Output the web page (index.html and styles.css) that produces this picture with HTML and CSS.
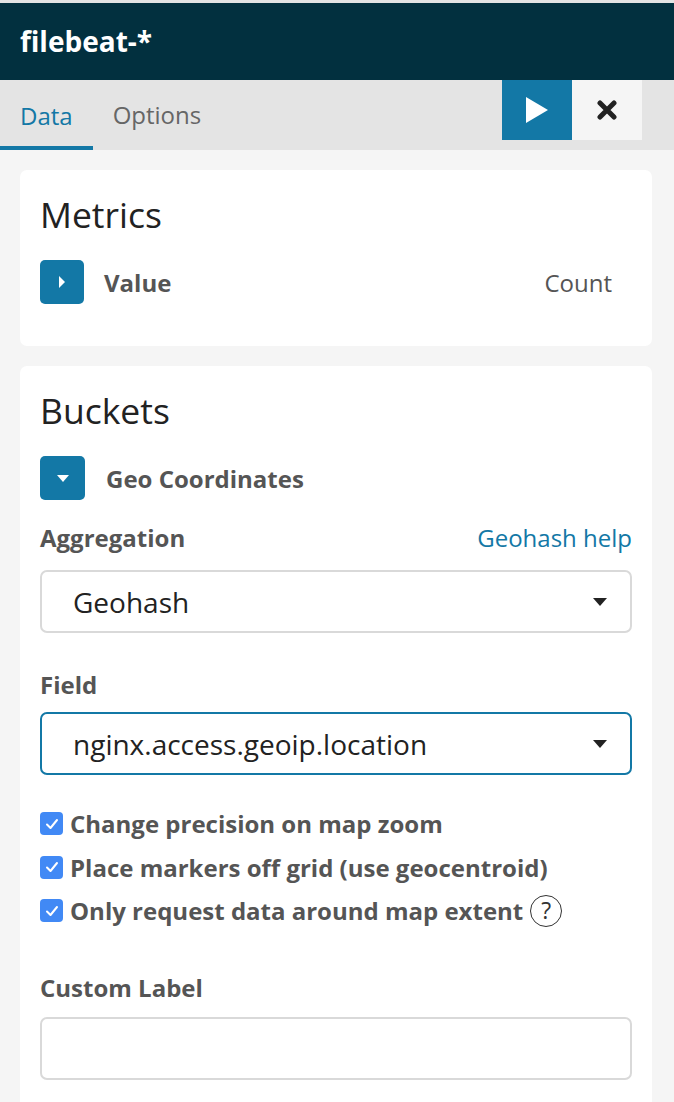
FILE: index.html
```html
<!DOCTYPE html>
<html>
<head>
<meta charset="utf-8">
<link rel="stylesheet" href="styles.css">
</head>
<body>
<div class="app">
  <header class="titlebar">filebeat-*</header>
  <nav class="tabbar">
    <div class="tabs">
      <span class="tab tab-active">Data</span>
      <span class="tab">Options</span>
    </div>
    <div class="actions">
      <button class="btn-apply" aria-label="Apply">
        <svg width="24" height="28" viewBox="0 0 24 28"><path d="M1 1 L23 14 L1 27 Z" fill="#fff"/></svg>
      </button>
      <button class="btn-discard" aria-label="Discard">
        <svg width="20" height="20" viewBox="0 0 20 20"><path d="M3 3 L17 17 M17 3 L3 17" stroke="#222" stroke-width="5" stroke-linecap="round"/></svg>
      </button>
    </div>
  </nav>
  <main class="content">
    <section class="card">
      <h2 class="card-title">Metrics</h2>
      <div class="agg-row">
        <span class="toggle">
          <svg width="10" height="14" viewBox="0 0 10 14"><path d="M2 1 L8 7 L2 13 Z" fill="#fff"/></svg>
        </span>
        <span class="agg-name">Value</span>
        <span class="agg-desc">Count</span>
      </div>
    </section>
    <section class="card card-open">
      <h2 class="card-title">Buckets</h2>
      <div class="agg-row">
        <span class="toggle toggle-wide">
          <svg width="14" height="10" viewBox="0 0 14 10"><path d="M1 2 L13 2 L7 9 Z" fill="#fff"/></svg>
        </span>
        <span class="agg-name agg-name-wide">Geo Coordinates</span>
      </div>
      <div class="field-head">
        <label class="label">Aggregation</label>
        <a class="help-link">Geohash help</a>
      </div>
      <div class="select">
        <span class="select-value">Geohash</span>
        <span class="caret"></span>
      </div>
      <label class="label label-field">Field</label>
      <div class="select select-focus">
        <span class="select-value">nginx.access.geoip.location</span>
        <span class="caret"></span>
      </div>
      <ul class="checks">
        <li class="check">
          <span class="box"><svg width="14" height="12" viewBox="0 0 14 12"><path d="M2 6.5 L5.5 10 L12 2" stroke="#fff" stroke-width="2" fill="none" stroke-linecap="round" stroke-linejoin="round"/></svg></span>
          <span class="check-text">Change precision on map zoom</span>
        </li>
        <li class="check">
          <span class="box"><svg width="14" height="12" viewBox="0 0 14 12"><path d="M2 6.5 L5.5 10 L12 2" stroke="#fff" stroke-width="2" fill="none" stroke-linecap="round" stroke-linejoin="round"/></svg></span>
          <span class="check-text">Place markers off grid (use geocentroid)</span>
        </li>
        <li class="check">
          <span class="box"><svg width="14" height="12" viewBox="0 0 14 12"><path d="M2 6.5 L5.5 10 L12 2" stroke="#fff" stroke-width="2" fill="none" stroke-linecap="round" stroke-linejoin="round"/></svg></span>
          <span class="check-text">Only request data around map extent</span>
          <span class="help-circle">?</span>
        </li>
      </ul>
      <label class="label label-custom">Custom Label</label>
      <div class="input"></div>
    </section>
  </main>
</div>
</body>
</html>
```

FILE: styles.css
```css
* { box-sizing: border-box; }
html, body { margin: 0; padding: 0; }
body {
  font-family: "Open Sans", "Noto Sans", sans-serif;
  background: #f5f5f5;
  width: 674px;
  height: 1102px;
  overflow: hidden;
}
.app { border-top: 3px solid #e4e4e4; }
.titlebar {
  height: 77px;
  background: #02303f;
  color: #fff;
  font-weight: 700;
  font-size: 28px;
  line-height: 77px;
  padding-left: 20px;
  padding-bottom: 4px;
}
.tabbar {
  height: 70px;
  background: #e4e4e4;
  display: flex;
  justify-content: space-between;
}
.tabs { display: flex; }
.tab {
  font-size: 24px;
  color: #666;
  padding: 0 20px;
  line-height: 70px;
  height: 70px;
}
.tab-active {
  color: #1378a6;
  border-bottom: 4px solid #1378a6;
  line-height: 72px;
}
.actions { display: flex; margin-right: 32px; height: 60px; }
.actions button {
  width: 70px;
  height: 60px;
  border: 0;
  padding: 0;
  margin: 0;
  display: flex;
  align-items: center;
  justify-content: center;
}
.btn-apply { background: #1378a6; }
.btn-discard { background: #f5f5f5; }
.content {
  padding: 20px 22px 0 20px;
  display: flex;
  flex-direction: column;
  gap: 20px;
}
.card {
  background: #fff;
  border-radius: 7px;
  padding: 21px 20px 42px;
}
.card-open { padding-bottom: 22px; border-radius: 7px 7px 0 0; }
.card-title {
  margin: 0;
  font-weight: 400;
  font-size: 35.5px;
  line-height: 46px;
  color: #222;
}
.agg-row {
  display: flex;
  align-items: center;
  margin-top: 23px;
  height: 44px;
}
.toggle {
  width: 44px;
  height: 44px;
  border-radius: 5px;
  background: #1378a6;
  display: flex;
  align-items: center;
  justify-content: center;
}
.toggle-wide { width: 45px; }
.agg-name {
  font-weight: 700;
  font-size: 24px;
  color: #555;
  margin-left: 20px;
  flex: 1;
}
.agg-name-wide { margin-left: 21px; }
.agg-desc {
  font-size: 24px;
  color: #555;
  margin-right: 20px;
}
.field-head {
  display: flex;
  justify-content: space-between;
  align-items: baseline;
  margin-top: 21px;
}
.label {
  display: block;
  font-weight: 700;
  font-size: 24px;
  line-height: 34px;
  color: #555;
}
.help-link {
  font-size: 24px;
  color: #1378a6;
  line-height: 34px;
}
.select {
  margin-top: 15px;
  height: 63px;
  border: 2px solid #d9d9d9;
  border-radius: 7px;
  display: flex;
  align-items: center;
  justify-content: space-between;
  padding: 0 23px 0 31px;
}
.select-focus { border-color: #1378a6; margin-top: 10px; }
.select-value {
  font-size: 28px;
  color: #222;
  line-height: 36px;
}
.caret {
  width: 0;
  height: 0;
  border-left: 7px solid transparent;
  border-right: 7px solid transparent;
  border-top: 8px solid #222;
}
.label-field { margin-top: 35px; }
.checks {
  list-style: none;
  margin: 27px 0 0;
  padding: 0;
  display: flex;
  flex-direction: column;
}
.check {
  display: flex;
  align-items: center;
  height: 43.5px;
}
.box {
  width: 23px;
  height: 23px;
  border-radius: 4px;
  background: #4189f5;
  display: flex;
  align-items: center;
  justify-content: center;
  margin-right: 7px;
}
.check-text {
  font-weight: 700;
  font-size: 24px;
  color: #555;
}
.help-circle {
  margin-left: 7px;
  width: 32px;
  height: 32px;
  border: 1.6px solid #333;
  border-radius: 50%;
  font-size: 23px;
  line-height: 29px;
  text-align: center;
  color: #333;
}
.label-custom { margin-top: 38px; }
.input {
  margin-top: 12px;
  height: 63px;
  border: 2px solid #d9d9d9;
  border-radius: 7px;
}
```
